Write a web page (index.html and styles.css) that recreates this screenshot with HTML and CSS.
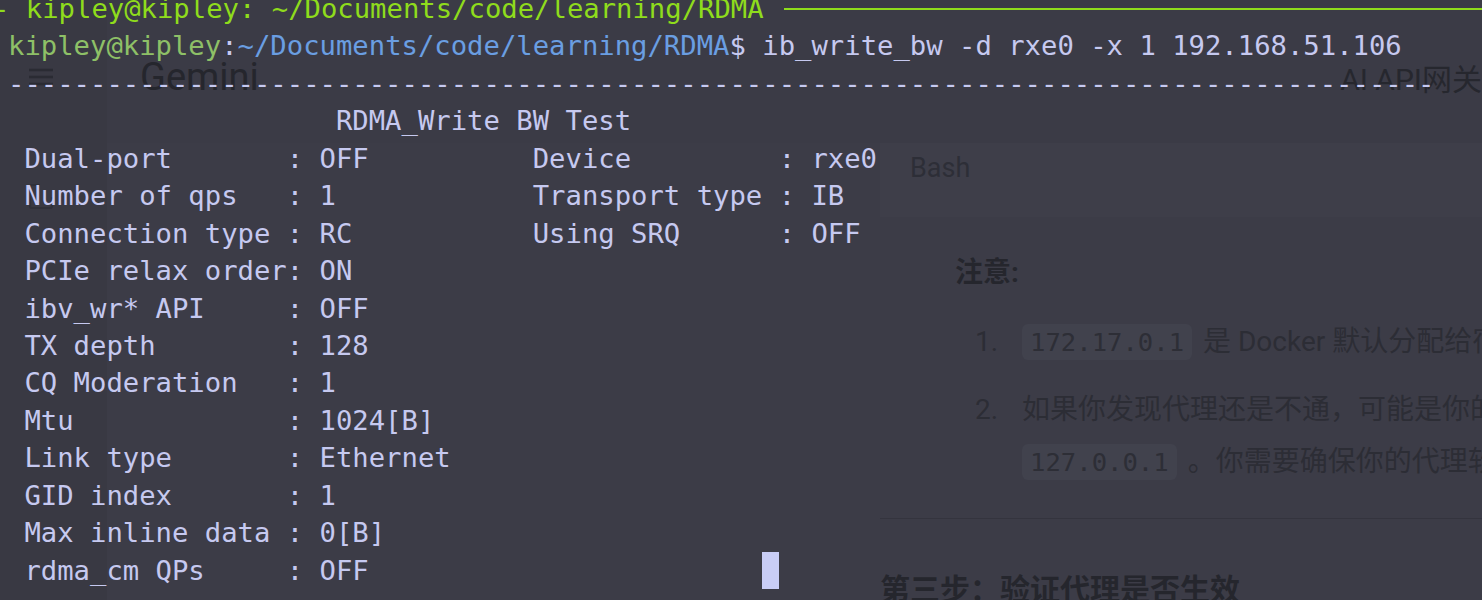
FILE: index.html
```html
<!DOCTYPE html>
<html lang="zh-CN">
<head>
<meta charset="utf-8">
<title>ib_write_bw</title>
<link rel="stylesheet" href="styles.css">
</head>
<body>
<div class="page">
  <aside class="side">
    <svg class="ic-menu" width="26" height="18" viewBox="0 0 26 18"><path d="M1 2h24M1 9h24M1 16h24" stroke="#2a2b33" stroke-width="2.4" fill="none"/></svg>
    <svg class="ic-edit" width="26" height="28" viewBox="0 0 26 28"><path d="M12 3H4a2 2 0 0 0-2 2v19a2 2 0 0 0 2 2h18a2 2 0 0 0 2-2v-9" stroke="#30313a" stroke-width="2.2" fill="none"/></svg>
  </aside>
  <main class="main">
    <header class="topbar">
      <div class="tb-row">
        <span class="brand">Gemini</span>
        <span class="gateway">AI API网关</span>
      </div>
    </header>
    <section class="content">
      <div class="code-head">Bash</div>
      <div class="note">注意:</div>
      <ol class="list">
        <li class="item"><span class="num">1.</span><div class="txt"><div class="ln"><code class="chip">172.17.0.1</code> 是 Docker 默认分配给宿主机的网关地址。</div></div></li>
        <li class="item"><span class="num">2.</span><div class="txt"><div class="ln">如果你发现代理还是不通，可能是你的代理软件只监听了</div><div class="ln"><code class="chip">127.0.0.1</code> 。你需要确保你的代理软件开启了“允许局域网连接”。</div></div></li>
      </ol>
      <hr class="rule">
      <h3 class="step">第三步：验证代理是否生效</h3>
    </section>
  </main>
</div>

<div class="term">
  <div class="lines">
    <div class="title-row"><span class="title-txt">- kipley@kipley: ~/Documents/code/learning/RDMA</span><span class="title-rule"></span></div>
    <div class="ln-t"><span class="p-user">kipley@kipley</span>:<span class="p-path">~/Documents/code/learning/RDMA</span>$ ib_write_bw -d rxe0 -x 1 192.168.51.106</div>
    <div class="ln-t">---------------------------------------------------------------------------------------</div>
    <div class="ln-t">                    RDMA_Write BW Test</div>
    <div class="ln-t"> Dual-port       : OFF          Device         : rxe0</div>
    <div class="ln-t"> Number of qps   : 1            Transport type : IB</div>
    <div class="ln-t"> Connection type : RC           Using SRQ      : OFF</div>
    <div class="ln-t"> PCIe relax order: ON</div>
    <div class="ln-t"> ibv_wr* API     : OFF</div>
    <div class="ln-t"> TX depth        : 128</div>
    <div class="ln-t"> CQ Moderation   : 1</div>
    <div class="ln-t"> Mtu             : 1024[B]</div>
    <div class="ln-t"> Link type       : Ethernet</div>
    <div class="ln-t"> GID index       : 1</div>
    <div class="ln-t"> Max inline data : 0[B]</div>
    <div class="ln-t"> rdma_cm QPs     : OFF                        <span class="cursor"> </span></div>
  </div>
</div>
</body>
</html>
```
FILE: styles.css
```css
html, body {
  margin: 0;
  padding: 0;
}
body {
  width: 1482px;
  height: 600px;
  overflow: hidden;
  position: relative;
  background: #3b3b46;
}

/* ---- the page behind the translucent terminal ---- */
.page {
  display: grid;
  grid-template-columns: 107px 1fr;
  height: 600px;
  font-family: Roboto, "Noto Sans CJK SC", sans-serif;
  color: #2b2c34;
}
.side {
  background: #393943;
  display: flex;
  flex-direction: column;
  align-items: flex-start;
  padding: 68px 0 0 28px;
  gap: 96px;
}
.main {
  display: flex;
  flex-direction: column;
  min-width: 0;
}
.topbar {
  height: 143px;
  flex: none;
}
.tb-row {
  margin-top: 57px;
  height: 40px;
  display: flex;
  align-items: center;
  justify-content: space-between;
}
.brand {
  margin-left: 33px;
  font-size: 38px;
  color: #25262d;
}
.gateway {
  font-size: 30px;
  color: #26272e;
  margin-right: 0;
}
.content {
  padding-left: 773px;
  background: #3c3c47;
  flex: 1;
}
.code-head {
  background: #3e3e49;
  height: 74px;
  box-sizing: border-box;
  padding: 10px 30px;
  line-height: 30px;
  font-size: 27px;
  color: #2d2e37;
}
.note {
  margin-top: 36px;
  padding-left: 75px;
  font-size: 28px;
  line-height: 40px;
  font-weight: 700;
  color: #25262d;
}
.list {
  list-style: none;
  margin: 23px 0 0;
  padding: 0 0 0 95px;
  font-size: 28px;
  line-height: 52px;
  color: #2c2d35;
}
.item {
  display: flex;
  margin-bottom: 16px;
}
.item:last-child {
  margin-bottom: 0;
}
.num {
  width: 47px;
  flex: none;
}
.txt {
  min-width: 0;
}
.ln {
  white-space: nowrap;
}
.chip {
  font-family: "DejaVu Sans Mono", monospace;
  font-size: 25.6px;
  background: #41424d;
  border-radius: 6px;
  padding: 3px 8px;
  margin-right: 4px;
  color: #2d2e36;
}
.rule {
  margin: 30px 0 0;
  border: 0;
  border-top: 1px solid #34343e;
}
.step {
  margin: 51px 0 0;
  font-size: 30px;
  line-height: 40px;
  font-weight: 700;
  color: #25262d;
  white-space: nowrap;
}

/* ---- terminal window on top ---- */
.term {
  position: absolute;
  left: 0;
  top: 0;
  right: 0;
  bottom: 0;
  padding: 0 8px;
  font-family: "DejaVu Sans Mono", monospace;
  font-size: 27.24px;
  line-height: 37.43px;
  color: #c6c9f0;
}
.lines {
  margin-top: -10px;
}
.ln-t,
.title-txt {
  white-space: pre;
}
.title-row {
  display: flex;
  align-items: center;
  margin-left: -15px;
  color: #8fdc1c;
}
.title-rule {
  flex: 1;
  height: 2px;
  background: #8fdc1c;
  margin-left: 20px;
  margin-right: -8px;
}
.p-user {
  color: #8ec067;
}
.p-path {
  color: #6a9ee2;
}
.cursor {
  display: inline-block;
  width: 16.4px;
  height: 37px;
  vertical-align: top;
  background: #c9cdf6;
}
```
